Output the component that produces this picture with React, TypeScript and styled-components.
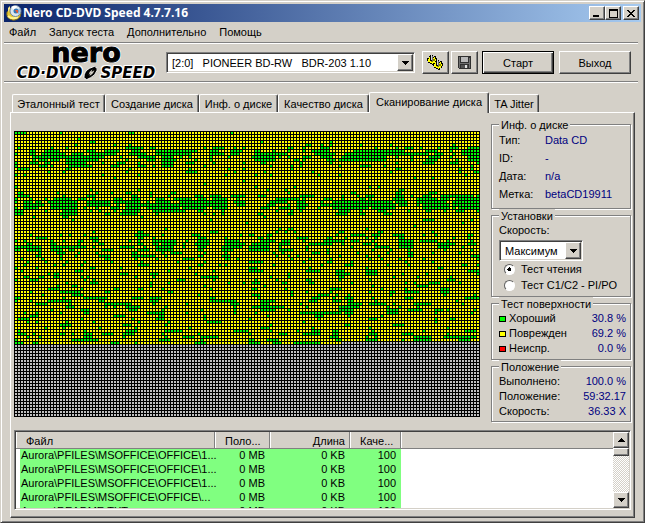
import React, { useState } from 'react';
import styled, { createGlobalStyle, css } from 'styled-components';

const face = '#d4d0c8';
const navy = '#000080';
const ui = '"Liberation Sans", Arial, sans-serif';

const GlobalStyle = createGlobalStyle`
  *, *::before, *::after { box-sizing: border-box; }
  body { margin: 0; background: ${face}; color: #000; font: 11px/14px ${ui}; }
  button, select, input { font: inherit; color: inherit; }
`;

const raised = css`
  border: 1px solid;
  border-color: #fff #404040 #404040 #fff;
  box-shadow: inset -1px -1px 0 #808080;
`;
const sunken = css`
  border: 1px solid;
  border-color: #808080 #fff #fff #808080;
  box-shadow: inset 1px 1px 0 #404040, inset -1px -1px 0 ${face};
`;

const Window = styled.main`
  display: flex;
  flex-direction: column;
  height: 100vh;
  padding: 3px;
  background: ${face};
  border: 1px solid;
  border-color: ${face} #404040 #404040 ${face};
  box-shadow: inset 1px 1px 0 #fff, inset -1px -1px 0 #808080;
`;

const TitleBar = styled.header`
  display: flex;
  align-items: center;
  flex: none;
  height: 18px;
  padding: 0 2px;
  background: linear-gradient(90deg, #0a246a, #a6caf0);
`;
const Title = styled.h1`
  flex: 1;
  margin: 0 0 0 1px;
  color: #fff;
  font: bold 12px/18px "Noto Sans", sans-serif;
  white-space: nowrap;
`;
const CaptionButton = styled.button<{ $apart?: boolean }>`
  ${raised}
  display: grid;
  place-items: center;
  width: 16px;
  height: 14px;
  margin-left: ${p => (p.$apart ? 2 : 0)}px;
  padding: 0;
  background: ${face};
`;

const MenuBar = styled.nav`
  display: flex;
  flex: none;
  gap: 13px;
  height: 20px;
  padding: 0 5px;
`;
const MenuItem = styled.button`
  padding: 0;
  border: 0;
  background: none;
  line-height: 20px;
`;

const Toolbar = styled.div`
  display: flex;
  align-items: center;
  flex: none;
  height: 41px;
  margin-right: 3px;
  border-top: 1px solid #808080;
  border-bottom: 1px solid #fff;
  box-shadow: inset 0 1px 0 #fff, inset 0 -1px 0 #808080;
`;
const Logo = styled.div`
  display: flex;
  flex-direction: column;
  align-items: center;
  flex: none;
  width: 162px;
  padding-left: 2px;
  color: #000;
  font-family: "DejaVu Sans", sans-serif;
  font-weight: bold;
  text-shadow: 1px 1px 0 #fff, -1px -1px 0 #fff, 1px -1px 0 #fff, -1px 1px 0 #fff;
`;
const LogoName = styled.span`
  height: 21px;
  font-size: 27px;
  line-height: 16px;
  -webkit-text-stroke: 1px #000;
`;
const LogoProduct = styled.span`
  display: flex;
  align-items: center;
  height: 14px;
  font-size: 15px;
  font-style: italic;
  line-height: 14px;
`;

const SelectBox = styled.div<{ $grow?: boolean }>`
  ${sunken}
  display: grid;
  grid-template-columns: minmax(0, 1fr) 16px;
  align-items: stretch;
  flex: ${p => (p.$grow ? '1 1 0' : 'none')};
  width: ${p => (p.$grow ? 'auto' : '84px')};
  height: 21px;
  padding: 1px;
  background: #fff;
`;
const Select = styled.select`
  grid-area: 1 / 1 / 2 / 3;
  appearance: none;
  min-width: 0;
  margin: 1px;
  padding: 0 16px 0 3px;
  border: 0;
  background: transparent;
  outline: 0;
`;
const Arrow = styled.span`
  ${raised}
  grid-area: 1 / 2;
  display: grid;
  place-items: center;
  background: ${face};
  pointer-events: none;
`;

const ToolButtons = styled.div`
  display: flex;
  flex: none;
  gap: 2px;
  margin: 0 4px 0 7px;
`;
const IconButton = styled.button`
  ${raised}
  display: grid;
  place-items: center;
  width: 27px;
  height: 23px;
  padding: 0;
  background: ${face};
`;
const PushButton = styled.button<{ $primary?: boolean }>`
  ${raised}
  flex: none;
  width: 72px;
  height: 23px;
  margin-right: ${p => (p.$primary ? 5 : 7)}px;
  padding: 0;
  background: ${face};
  ${p => p.$primary && css`
    border-color: #000;
    box-shadow: inset 1px 1px 0 #fff, inset -1px -1px 0 #404040, inset -2px -2px 0 #808080;
  `}
`;

const Tabs = styled.div`
  display: flex;
  align-items: flex-end;
  flex: none;
  height: 29px;
  padding-left: 8px;
`;
const Tab = styled.button<{ $on: boolean; $w: number }>`
  position: relative;
  width: ${p => p.$w}px;
  height: ${p => (p.$on ? 21 : 18)}px;
  margin-bottom: ${p => (p.$on ? -1 : 0)}px;
  padding: 0 0 ${p => (p.$on ? 2 : 0)}px;
  z-index: ${p => (p.$on ? 1 : 0)};
  background: ${face};
  border: 1px solid;
  border-color: #fff #404040 transparent #fff;
  border-bottom: 0;
  border-radius: 2px 2px 0 0;
  box-shadow: inset -1px 0 0 #808080;
  white-space: nowrap;
`;
const Page = styled.section`
  ${raised}
  display: flex;
  flex-direction: column;
  flex: 1;
  min-height: 0;
  margin: 0 6px 1px;
  padding: 5px 3px 7px;
`;
const Upper = styled.div`
  display: flex;
  justify-content: space-between;
  gap: 10px;
  flex: none;
  padding-bottom: 8px;
`;
const Surface = styled.svg`
  flex: none;
  margin-top: 13px;
`;
const Side = styled.div`
  display: flex;
  flex-direction: column;
  flex: 0 0 140px;
`;
const Group = styled.fieldset<{ $h: number }>`
  display: flex;
  flex-direction: column;
  min-width: 0;
  height: ${p => p.$h}px;
  margin: 0;
  padding: 2px 4px 0 7px;
  border: 1px solid #808080;
  box-shadow: 1px 1px 0 #fff, inset 1px 1px 0 #fff;
`;
const Legend = styled.legend`
  height: 12px;
  padding: 0 2px;
  line-height: 15px;
  background: ${face};
`;
const Facts = styled.dl`
  display: grid;
  grid-template-columns: 46px 1fr;
  grid-auto-rows: 17px;
  row-gap: 1px;
  margin: 0;
  line-height: 17px;
`;
const Stats = styled.dl`
  display: grid;
  grid-template-columns: 1fr auto;
  grid-auto-rows: 15px;
  margin: 0;
  line-height: 15px;
`;
const Term = styled.dt`
  display: flex;
  align-items: center;
  gap: 3px;
  white-space: nowrap;
`;
const Value = styled.dd<{ $end?: boolean }>`
  margin: 0;
  color: ${navy};
  text-align: ${p => (p.$end ? 'right' : 'left')};
  white-space: nowrap;
`;
const Swatch = styled.i<{ $c: string }>`
  width: 7px;
  height: 6px;
  background: ${p => p.$c};
  border: 1px solid #000;
`;
const FieldLabel = styled.label`
  height: 17px;
  line-height: 14px;
`;
const RadioRow = styled.label`
  display: flex;
  align-items: center;
  gap: 6px;
  height: 16px;
  padding-left: 5px;
  white-space: nowrap;
`;
const Radio = styled.input`
  appearance: none;
  flex: none;
  width: 11px;
  height: 11px;
  margin: 0;
  border: 1px solid;
  border-color: #606060 #fff #fff #606060;
  border-radius: 50%;
  background: #fff;
  &:checked { background: radial-gradient(circle, #000 0 2px, #fff 2px); }
`;

const ListBox = styled.div`
  ${sunken}
  display: flex;
  flex: 1;
  min-height: 0;
  padding: 1px;
  background: #fff;
`;
const TableClip = styled.div`
  flex: 1;
  min-width: 0;
  overflow: hidden;
`;
const Table = styled.table`
  width: 100%;
  table-layout: fixed;
  border-collapse: separate;
  border-spacing: 0;
`;
const Th = styled.th<{ $align?: string; $w?: number }>`
  width: ${p => (p.$w ? `${p.$w}px` : 'auto')};
  height: 17px;
  padding: 3px 4px 0 10px;
  overflow: hidden;
  background: ${face};
  border-right: 1px solid #808080;
  border-bottom: 1px solid #808080;
  box-shadow: inset 1px 0 0 #fff;
  font-weight: normal;
  line-height: 13px;
  text-align: ${p => p.$align ?? 'left'};
  &:last-child { border-right: 0; }
`;
const Td = styled.td<{ $align?: string }>`
  height: 14px;
  padding: 0 5px 0 2px;
  background: #80ff80;
  line-height: 12px;
  text-align: ${p => p.$align ?? 'left'};
  vertical-align: top;
  white-space: nowrap;
  &:first-child { padding: 0 0 0 1px; border-left: 4px solid #fff; }
  &:last-child { background: #fff; }
`;
const Scrollbar = styled.div`
  display: flex;
  flex-direction: column;
  flex: 0 0 16px;
  background: repeating-conic-gradient(#fff 0 25%, ${face} 0 50%) 0 0 / 2px 2px;
`;
const ScrollButton = styled.button`
  ${raised}
  display: grid;
  place-items: center;
  height: 16px;
  padding: 0;
  background: ${face};
`;
const Thumb = styled.div`
  ${raised}
  height: 8px;
  margin-bottom: auto;
  background: ${face};
`;

/* Runs of good blocks on each scanned row, as first-last column. */
const goodRuns = [
  '0-3 15 38-39 72', '', '21', '25-26 82 105', '20 33 38 97-98 102 105 115 125 146',
  '1 12 17 37-42 45-46 63 66-69 73 76 91-92 96 102-104 120 127 130-132 135 141 145-147 151-154',
  '5-6 10-14 24-26 30-34 39-41 47-60 65-67 72-75 80-81 86 91 96 99-104 113-129 137-140 145 149-154',
  '0 5-6 9-16 19-22 25-33 38-43 47-58 65-69 72-74 80-90 100-106 110-137 140-142 146 149-154',
  '6-29 35 41-46 49-52 55 58 65 71 79-86 88 91 96-98 102-105 109-123 127 132 138-141 145 151-154',
  '6 8-10 12-14 17-27 37 44-46 49-53 60 65 80-86 93-94 96 104-106 108-123 132 137-140 147 151-154',
  '0 5-7 10-11 17-23 29 34-36 41 49-52 57-59 66 76 82-83 95 105 127 136-139 145-147 154',
  '0 8-10 12 18-25 32-34 41-43 46 49-52 63 85 92 95 108 115-118 123 152',
  '1-4 17-18 38 58 71 76 92 127-128 148 152', '11 16 37 57-60 73 83 99 125 148 153-154',
  '0 3 29 41 70 80 85 101 108 150', '33 133 139', '76', '63', '0 80 93 118 121',
  '25 41 84 90 128-129', '1-2 14 27 32 37-38 45 52-53 91 112-113 127-128 138-140',
  '1-4 16 24-26 39-40 45 51 60-62 65-68 72-76 81-83 95-99 109 114 117-119 127-129 132 136-138 142-152 154',
  '0 5 10 13-18 21-23 26 33-35 39-41 47-49 53-58 61-63 66-70 74 87-94 96 103-105 109 115-116 118 126-129 134-140 142-144 147-154',
  '0 3-5 7-8 11-20 24-31 33-41 44 47-51 55-70 73-76 85-90 94-96 102 106-125 127-130 134-143 146-154',
  '3-9 12-20 24-31 34 37-70 74-76 84-86 91 94-97 102-126 128-130 134 136-144 146-154',
  '0 3-6 7 12-20 23 27 32-34 37-41 44-54 56-63 66-70 82-84 88-91 94-96 101 106-117 119-126 136-144 146 148-154',
  '0-2 10 16-20 25 28 33 36-41 46-56 61-62 69 87 92 95 108-111 115 121-123 131 137-138 143 147-149 154',
  '0-2 15-20 30-31 35-40 47 63 66 69 81-82 91-92 107-110 115-116 123-125', '6 16-17 42 83',
  '19 65 136-139 152', '77 149', '133', '50 88 91-92 117', '26 41-42 65-67 87 90 93 108-109 121-122 139',
  '5 15 18 23 40-44 49 59-61 75 78-79 84-85 107 112-116 119-121 126-129 136 140 151-152',
  '7-10 25-27 41-42 46 61-63 70 81-82 84 94-97 104-105 110 117 120 128-129 146 151',
  '0 3 12 16 21-22 26-27 38 41 46-53 57 61-64 70-74 82-86 89-91 96 103-109 112-114 119 128-132 135-140 144 152',
  '4-5 12-13 21 28-29 41-42 46-47 49-53 56 60-64 70-76 79-84 88-91 98-105 109 116-118 120 128-132 141-146 151-153',
  '0-8 12-23 26 35-39 43 47-52 56 61-63 69-75 78-84 88 97 112 120-124 128-132 141-144 149',
  '0-1 4-8 12-15 18-19 29-32 41-44 47-52 61-62 69-72 78-84 88-92 97 104 119 125 131 143 152',
  '8 14-16 21 27 39-40 49 52-55 63 70 86 89 99-101 104 114 124 131-132 139 148',
  '7-8 15 20 28-31 39-46 50 61-62 69-71 87 91 94 108 117 121 131-132 152-154',
  '2 9 15 30-31 40 47 56-59 70-71 74 92 98 105 118 122 128 136 154',
  '4 10 17 23 32 42 54 63 78-82 96 104-105 112 130 139',
  '3 13 16 22 41-44 61-62 68 70 86 102 110-112 124 131 149-150 154', '0 7 25-26 35 58 78-80 98 117 141-142',
  '2 20-22 51 66 78-82 97-101 107-109 117-120 151-154', '11 13-14 35-37 45-47 60 91 107-111 117-120 129 137 154',
  '3-4 8-9 13-14 22 24 40 46 62-67 85 91 108-109 126 134 145', '0 5-7 23 26 54-56 66 80 87 97-98 108 118 144-146',
  '17 25-27 45 51 71 76 79-81 89-90 98-99 112 130 133 138-141 148', '14 19-20 45 63 83 119 134-137',
  '11-14 22 33-34 41-42 49 65 79-80 90 105-108 122 130 142-144', '5 15-21 30-31 51-52 92 97 105 118 125-126 130-134 142-144',
  '9 19-22 61 79-81 92 101-104 107 111 125 143 153', '0-1 16 23-30 39-42 45-48 65-66 81 99-101 106 110-112 119 130-132 150-154',
  '0 5 11-18 28-29 45-47 65-73 82-86 98-100 106-108 111-112 120 147', '7-10 18 30-38 46 57 72-74 82-84 95 111-115 118-123 126 133-138 149',
  '17-19 30 33 37-41 50 73 79-89 97 108-114 124 128 134', '12 22-24 38-40 49 62 73 82-86 91 108-112 124-127 131-135 140-142 144 153',
  '3 7 15 23-24 44-49 57 73 80 95-108 110-112 124-127 140 152', '5-7 33-36 48-49 63 84 100-102 111 122',
  '1-4 22 39 47-49 63 78 101 118-120 140 145-146', '4 7 17 26 41 51 64-68 96 140',
  '15-18 36-38 50 85 110-111 126-129', '10 16 28 40 58 82-84 99 118 144',
  '1 23 37-40 50-55 73-77 85 94 99-101 106-107 119 136 150-153', '1-3 6 15-16 19 23-25 29-32 36-39 49 61 78 88-90 96-101 106-107 118-120 129-132 144',
  '4 8 23-25 36 50 56-59 62-67 105-107 117 120 133-138 143-153', '0 19-27 48-51 62 78-79 84-87 107-108 117-120 129 133-138 148-151',
  '0-2 6-7 32-34 40 60-63 78-81 86-88 93-101',
];
const goodPath = goodRuns
  .map((row, y) =>
    row.split(' ').filter(Boolean).map(run => {
      const [a, b = a] = run.split('-').map(Number);
      return `M${a * 3} ${y * 3}h${(b - a + 1) * 3}v3h-${(b - a + 1) * 3}z`;
    }).join(''))
  .join('');

const SurfaceMap = () => (
  <Surface width="466" height="286" viewBox="0 0 466 286" shapeRendering="crispEdges" role="img" aria-label="Карта поверхности">
    <defs>
      <pattern id="mesh" width="3" height="3" patternUnits="userSpaceOnUse">
        <path d="M0 0h3v1h-3zM0 1h1v2h-1z" />
      </pattern>
    </defs>
    <rect width="466" height="286" fill="#c0c0c0" />
    <path d="M0 0H466V211H328V214H0Z" fill="#ff0" />
    <path d={goodPath} fill="#0f0" />
    <rect width="466" height="286" fill="url(#mesh)" />
  </Surface>
);

const Triangle = ({ up = false }: { up?: boolean }) => (
  <svg width="7" height="4" viewBox="0 0 7 4" shapeRendering="crispEdges" aria-hidden="true">
    <path d={up ? 'M3 0h1v1h1v1h1v1h1v1H0V3h1V2h1V1h1z' : 'M0 0h7v1H6v1H5v1H4v1H3V3H2V2H1V1H0z'} />
  </svg>
);

const AppIcon = () => (
  <svg width="16" height="16" viewBox="0 0 16 16" aria-hidden="true">
    <path d="M1 7Q0 12 4 14Q9 17 14 12L15 8L5 3Z" fill="#e9c931" stroke="#806c22" />
    <path d="M2 11Q6 15 12 12" fill="none" stroke="#fff391" strokeWidth="2" />
    <circle cx="9.5" cy="6" r="5.5" fill="#dce7ef" stroke="#71869b" />
    <path d="M9 6L5 2Q8 0 11 1Z" fill="#fff" />
    <path d="M10 6L14 3Q15 6 13 10Z" fill="#9fc4e2" />
    <circle cx="10" cy="6" r="2.5" fill="#3277b8" />
    <path d="M9 5h3v3h-1z" fill="#e65b36" />
    <path d="M2 3l2-2v3l-2 3z" fill="#f8e989" />
  </svg>
);

const Gears = () => (
  <svg width="17" height="16" viewBox="0 0 17 16" shapeRendering="crispEdges" aria-hidden="true">
    <g id="gear">
      <path d="M2 1h2v1h3V1h2v2h1v3H9v2H7v2H5V9H3V8H1V6H0V3h2z" />
      <path d="M2 2h1v1h4V2h1v2h1v2H8v2H6v1H5V8H3V7H1V4h1z" fill="#ffff00" />
      <path d="M6 4h2v2H6v1H4V6h2z" fill="#808000" />
      <path d="M3 0h3v6H3z" fill="#000" />
      <path d="M4 0h1v5H4z" fill="#d8d8d8" />
      <path d="M5 1h1v5H5z" fill="#707070" />
    </g>
    <use href="#gear" x="6" y="5" />
  </svg>
);

const Floppy = () => (
  <svg width="13" height="13" viewBox="0 0 13 13" shapeRendering="crispEdges" aria-hidden="true">
    <path d="M0 0h13v13H1l-1-1z" fill="#303030" />
    <path d="M1 1h1v11H1zM11 2h1v10h-1zM2 7h9v1H2z" fill="#707070" />
    <path d="M3 1h7v5H3z" fill="#b8b8b8" />
    <path d="M3 9h7v3H3z" fill="#505050" />
    <path d="M7 9h2v3H7z" fill="#e0e0e0" />
  </svg>
);

const Flame = () => (
  <svg width="18" height="14" viewBox="0 0 19 14" aria-hidden="true">
    <path d="M2 12Q2 5 8 2L13 0Q17 1 16 4Q14 10 9 12L5 14Z" stroke="#fff" />
    <path d="M7 9Q8 5 11 3L10 6L13 4Q12 8 8 10L9 7Z" fill={face} />
  </svg>
);

const tabs: [string, number][] = [
  ['Эталонный тест', 93], ['Создание диска', 94], ['Инф. о диске', 79],
  ['Качество диска', 91], ['Сканирование диска', 120], ['TA Jitter', 50],
];
const facts = [['Тип:', 'Data CD'], ['ID:', '-'], ['Дата:', 'n/a'], ['Метка:', 'betaCD19911']];
const quality = [['Хороший', '30.8 %', '#00ff00'], ['Поврежден', '69.2 %', '#ffff00'], ['Неиспр.', '0.0 %', '#ff0000']];
const progress = [['Выполнено:', '100.0 %'], ['Положение:', '59:32.17'], ['Скорость:', '36.33 X']];
const office = 'Aurora\\PFILES\\MSOFFICE\\OFFICE\\';
const files = [`${office}1...`, `${office}1...`, `${office}1...`, `${office}...`, 'Aurora\\README.TXT'];

export default function App() {
  const [tab, setTab] = useState(4);
  return (
    <>
      <GlobalStyle />
      <Window>
        <TitleBar>
          <AppIcon />
          <Title>Nero CD-DVD Speed 4.7.7.16</Title>
          <CaptionButton aria-label="Свернуть"><svg width="10" height="8"><path d="M1 6h6v2H1z" /></svg></CaptionButton>
          <CaptionButton aria-label="Развернуть">
            <svg width="9" height="9" shapeRendering="crispEdges"><path fillRule="evenodd" d="M0 0h9v9H0zM1 2v6h7V2z" /></svg>
          </CaptionButton>
          <CaptionButton $apart aria-label="Закрыть">
            <svg width="8" height="7" shapeRendering="crispEdges"><path d="M0 0h2v1h1v1h2V1h1V0h2v1H7v1H6v1H5v1h1v1h1v1h1v1H6V6H5V5H3v1H2v1H0V6h1V5h1V4h1V3H2V2H1V1H0z" /></svg>
          </CaptionButton>
        </TitleBar>
        <MenuBar>
          {['Файл', 'Запуск теста', 'Дополнительно', 'Помощь'].map(m => <MenuItem key={m}>{m}</MenuItem>)}
        </MenuBar>
        <Toolbar>
          <Logo>
            <LogoName>nero</LogoName>
            <LogoProduct>CD·DVD<Flame />SPEED</LogoProduct>
          </Logo>
          <SelectBox $grow>
            <Select aria-label="Привод">
              <option>{'[2:0]\u00a0\u00a0\u00a0PIONEER BD-RW\u00a0\u00a0\u00a0BDR-203 1.10'}</option>
            </Select>
            <Arrow><Triangle /></Arrow>
          </SelectBox>
          <ToolButtons>
            <IconButton aria-label="Настройки"><Gears /></IconButton>
            <IconButton aria-label="Сохранить"><Floppy /></IconButton>
          </ToolButtons>
          <PushButton $primary>Старт</PushButton>
          <PushButton>Выход</PushButton>
        </Toolbar>
        <Tabs role="tablist">
          {tabs.map(([name, w], i) => (
            <Tab key={name} role="tab" aria-selected={tab === i} $on={tab === i} $w={w} onClick={() => setTab(i)}>{name}</Tab>
          ))}
        </Tabs>
        <Page>
          <Upper>
            <SurfaceMap />
            <Side>
              <Group $h={91}>
                <Legend>Инф. о диске</Legend>
                <Facts>{facts.map(([k, v]) => <React.Fragment key={k}><Term>{k}</Term><Value>{v}</Value></React.Fragment>)}</Facts>
              </Group>
              <Group $h={88}>
                <Legend>Установки</Legend>
                <FieldLabel htmlFor="speed">Скорость:</FieldLabel>
                <SelectBox>
                  <Select id="speed"><option>Максимум</option></Select>
                  <Arrow><Triangle /></Arrow>
                </SelectBox>
                <RadioRow><Radio type="radio" name="test" defaultChecked />Тест чтения</RadioRow>
                <RadioRow><Radio type="radio" name="test" />Тест C1/C2 - PI/PO</RadioRow>
              </Group>
              <Group $h={63}>
                <Legend>Тест поверхности</Legend>
                <Stats>{quality.map(([k, v, c]) => <React.Fragment key={k}><Term><Swatch $c={c} />{k}</Term><Value $end>{v}</Value></React.Fragment>)}</Stats>
              </Group>
              <Group $h={62}>
                <Legend>Положение</Legend>
                <Stats>{progress.map(([k, v]) => <React.Fragment key={k}><Term>{k}</Term><Value $end>{v}</Value></React.Fragment>)}</Stats>
              </Group>
            </Side>
          </Upper>
          <ListBox>
            <TableClip>
              <Table>
                <thead>
                  <tr>
                    <Th $w={199}>Файл</Th><Th $w={55}>Поло...</Th><Th $w={80} $align="right">Длина</Th><Th $w={51}>Каче...</Th><Th aria-label="Прочее" />
                  </tr>
                </thead>
                <tbody>
                  {files.map((f, i) => (
                    <tr key={i}><Td>{f}</Td><Td $align="right">0 MB</Td><Td $align="right">0 KB</Td><Td $align="right">100</Td><Td /></tr>
                  ))}
                </tbody>
              </Table>
            </TableClip>
            <Scrollbar>
              <ScrollButton aria-label="Вверх"><Triangle up /></ScrollButton>
              <Thumb />
              <ScrollButton aria-label="Вниз"><Triangle /></ScrollButton>
            </Scrollbar>
          </ListBox>
        </Page>
      </Window>
    </>
  );
}
